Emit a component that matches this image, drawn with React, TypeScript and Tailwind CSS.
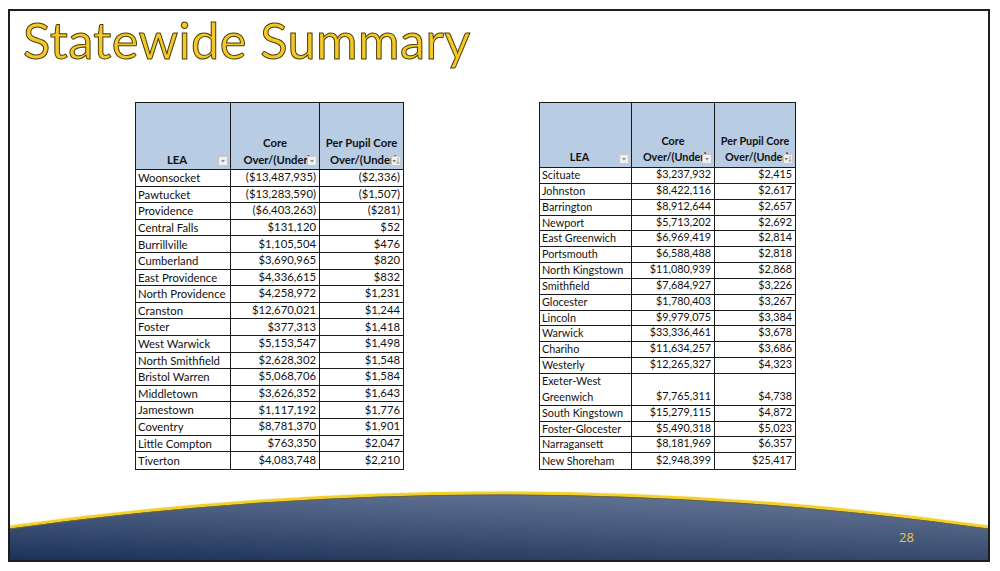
import React from 'react';

type Row = { lea: string; core: string; pupil: string; tall?: boolean };

const leftRows: Row[] = [
  { lea: 'Woonsocket', core: '($13,487,935)', pupil: '($2,336)' },
  { lea: 'Pawtucket', core: '($13,283,590)', pupil: '($1,507)' },
  { lea: 'Providence', core: '($6,403,263)', pupil: '($281)' },
  { lea: 'Central Falls', core: '$131,120', pupil: '$52' },
  { lea: 'Burrillville', core: '$1,105,504', pupil: '$476' },
  { lea: 'Cumberland', core: '$3,690,965', pupil: '$820' },
  { lea: 'East Providence', core: '$4,336,615', pupil: '$832' },
  { lea: 'North Providence', core: '$4,258,972', pupil: '$1,231' },
  { lea: 'Cranston', core: '$12,670,021', pupil: '$1,244' },
  { lea: 'Foster', core: '$377,313', pupil: '$1,418' },
  { lea: 'West Warwick', core: '$5,153,547', pupil: '$1,498' },
  { lea: 'North Smithfield', core: '$2,628,302', pupil: '$1,548' },
  { lea: 'Bristol Warren', core: '$5,068,706', pupil: '$1,584' },
  { lea: 'Middletown', core: '$3,626,352', pupil: '$1,643' },
  { lea: 'Jamestown', core: '$1,117,192', pupil: '$1,776' },
  { lea: 'Coventry', core: '$8,781,370', pupil: '$1,901' },
  { lea: 'Little Compton', core: '$763,350', pupil: '$2,047' },
  { lea: 'Tiverton', core: '$4,083,748', pupil: '$2,210' },
];

const rightRows: Row[] = [
  { lea: 'Scituate', core: '$3,237,932', pupil: '$2,415' },
  { lea: 'Johnston', core: '$8,422,116', pupil: '$2,617' },
  { lea: 'Barrington', core: '$8,912,644', pupil: '$2,657' },
  { lea: 'Newport', core: '$5,713,202', pupil: '$2,692' },
  { lea: 'East Greenwich', core: '$6,969,419', pupil: '$2,814' },
  { lea: 'Portsmouth', core: '$6,588,488', pupil: '$2,818' },
  { lea: 'North Kingstown', core: '$11,080,939', pupil: '$2,868' },
  { lea: 'Smithfield', core: '$7,684,927', pupil: '$3,226' },
  { lea: 'Glocester', core: '$1,780,403', pupil: '$3,267' },
  { lea: 'Lincoln', core: '$9,979,075', pupil: '$3,384' },
  { lea: 'Warwick', core: '$33,336,461', pupil: '$3,678' },
  { lea: 'Chariho', core: '$11,634,257', pupil: '$3,686' },
  { lea: 'Westerly', core: '$12,265,327', pupil: '$4,323' },
  { lea: 'Exeter-West Greenwich', core: '$7,765,311', pupil: '$4,738', tall: true },
  { lea: 'South Kingstown', core: '$15,279,115', pupil: '$4,872' },
  { lea: 'Foster-Glocester', core: '$5,490,318', pupil: '$5,023' },
  { lea: 'Narragansett', core: '$8,181,969', pupil: '$6,357' },
  { lea: 'New Shoreham', core: '$2,948,399', pupil: '$25,417' },
];

function FilterButton({ sorted }: { sorted?: boolean }) {
  return (
    <span className="absolute right-[2px] bottom-[3px] w-[10px] h-[10px] bg-[#f0f0f0] border border-[#c8c8c8] flex items-center justify-center">
      <svg width="8" height="8" viewBox="0 0 8 8">
        {sorted ? (
          <>
            <path d="M0.5 3 L4 3 L2.25 5.5 Z" fill="#7a7a7a" />
            <path d="M6 1 L6 6.5 M4.8 5.2 L6 6.8 L7.2 5.2" stroke="#8a8a8a" strokeWidth="0.8" fill="none" />
          </>
        ) : (
          <path d="M2 3 L6 3 L4 5.5 Z" fill="#8a8a8a" />
        )}
      </svg>
    </span>
  );
}

function DataTable({
  rows,
  widths,
  headH,
  rowH,
  textSize,
}: {
  rows: Row[];
  widths: [string, string, string];
  headH: string;
  rowH: number;
  textSize: string;
}) {
  return (
    <div className={`border-[1.5px] border-[#1a1a1a] text-[#111] ${textSize} leading-none`}>
      <div className={`flex ${headH} bg-[#b8cce4] border-b border-[#1a1a1a] font-bold`}>
        <div className={`${widths[0]} relative flex items-end justify-center pb-[4px] pr-[12px] border-r border-[#1a1a1a]`}>
          LEA
          <FilterButton />
        </div>
        <div className={`${widths[1]} relative flex flex-col items-center justify-end pb-[4px] border-r border-[#1a1a1a] overflow-hidden`}>
          <span className="mb-[5px]">Core</span>
          <span className="whitespace-nowrap pl-[4px]">Over/(Under)</span>
          <FilterButton />
        </div>
        <div className={`${widths[2]} relative flex flex-col items-center justify-end pb-[4px] overflow-hidden`}>
          <span className="mb-[5px] whitespace-nowrap">Per Pupil Core</span>
          <span className="whitespace-nowrap pl-[4px]">Over/(Under)</span>
          <FilterButton sorted />
        </div>
      </div>
      {rows.map((r, i) => (
        <div
          key={r.lea}
          className={`flex ${i < rows.length - 1 ? 'border-b border-[#1a1a1a]' : ''}`}
          style={{ height: r.tall ? rowH * 2 : rowH }}
        >
          <div className={`${widths[0]} flex flex-col justify-center pl-[2px] border-r border-[#1a1a1a] whitespace-nowrap`}>
            {r.tall ? (
              <>
                <span className="mb-[6px]">Exeter-West</span>
                <span>Greenwich</span>
              </>
            ) : (
              r.lea
            )}
          </div>
          <div className={`${widths[1]} flex items-end justify-end pr-[3px] pb-[3px] border-r border-[#1a1a1a] whitespace-nowrap`}>
            {r.core}
          </div>
          <div className={`${widths[2]} flex items-end justify-end pr-[3px] pb-[3px] whitespace-nowrap`}>
            {r.pupil}
          </div>
        </div>
      ))}
    </div>
  );
}

export default function App() {
  return (
    <div className="w-[1000px] h-[571px] bg-white pl-[8px] pt-[9px] font-['Lato','Open_Sans',sans-serif]">
      <div className="relative w-[982px] h-[553px] border-2 border-[#1e1e1e] flex flex-col overflow-hidden">
        <h1 className="pl-[13px] pt-[1px] h-[91px] text-[50.5px] leading-[56px] tracking-[0.4px] text-[#f3c82b] [-webkit-text-stroke:1px_#4a3d00]">
          Statewide Summary
        </h1>

        <div className="flex items-start">
          <div className="ml-[125px]">
            <DataTable
              rows={leftRows}
              widths={['w-[95px]', 'w-[89px]', 'w-[83px]']}
              headH="h-[67px]"
              rowH={16.6}
              textSize="text-[11.3px]"
            />
          </div>
          <div className="ml-[135px]">
            <DataTable
              rows={rightRows}
              widths={['w-[92px]', 'w-[83px]', 'w-[80px]']}
              headH="h-[65px]"
              rowH={15.85}
              textSize="text-[10.8px]"
            />
          </div>
        </div>

        <div className="mt-auto h-[70px]">
          <svg width="978" height="70" viewBox="0 0 978 70" preserveAspectRatio="none">
            <defs>
              <linearGradient id="band" x1="0" y1="1" x2="1" y2="0">
                <stop offset="0" stopColor="#213863" />
                <stop offset="0.5" stopColor="#3e547c" />
                <stop offset="1" stopColor="#5b6d8f" />
              </linearGradient>
              <linearGradient id="shade" x1="0" y1="0" x2="0" y2="1">
                <stop offset="0" stopColor="#ffffff" stopOpacity="0.1" />
                <stop offset="1" stopColor="#000000" stopOpacity="0.12" />
              </linearGradient>
            </defs>
            <path d="M0 37 Q489 -31 978 37 L978 70 L0 70 Z" fill="url(#band)" />
            <path d="M0 37 Q489 -31 978 37 L978 70 L0 70 Z" fill="url(#shade)" />
            <path d="M0 36 Q489 -32 978 36" stroke="#fdf3b0" strokeWidth="3" fill="none" opacity="0.5" />
            <path d="M0 37 Q489 -31 978 37" stroke="#f2cf2c" strokeWidth="3" fill="none" />
            <path d="M0 39 Q489 -29 978 39" stroke="#6b6638" strokeWidth="1" fill="none" />
          </svg>
        </div>

        <span className="absolute left-[889px] top-[517px] text-[13px] text-[#e6c64a] font-['Open_Sans',sans-serif]">
          28
        </span>
      </div>
    </div>
  );
}
